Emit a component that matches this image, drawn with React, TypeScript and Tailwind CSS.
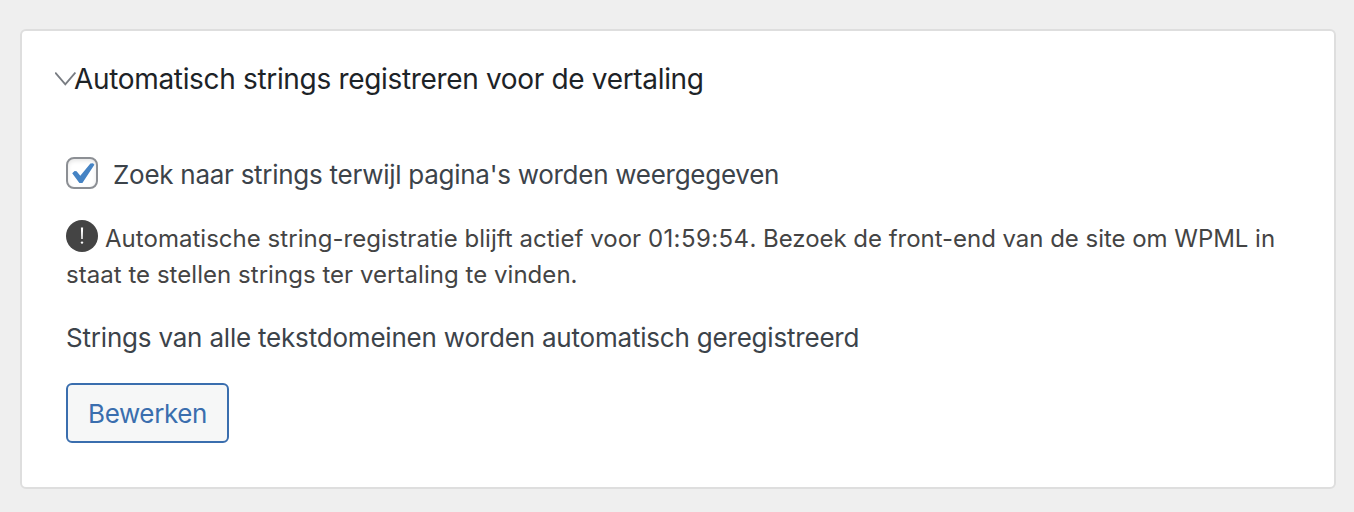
import { useState } from 'react';

interface ScanCheckboxProps {
  checked: boolean;
  onChange: (checked: boolean) => void;
  label: string;
}

function ScanCheckbox({ checked, onChange, label }: ScanCheckboxProps) {
  return (
    <label className="flex h-8 items-center gap-[15px] cursor-pointer">
      <input
        type="checkbox"
        className="sr-only"
        checked={checked}
        onChange={(e) => onChange(e.target.checked)}
      />
      <span className="size-8 shrink-0 rounded-lg border-2 border-[#8c8f94] bg-white shadow-[inset_0_2px_4px_rgba(0,0,0,0.1)]">
        {checked && (
          <svg viewBox="0 0 28 28" className="size-7" fill="#4583c4">
            <path d="M4.2 14.3 6.6 12l2 .3 3.7 4.5L22.4 4.5l2.6-.3 1.4 1.6L14.4 24h-3z" />
          </svg>
        )}
      </span>
      <span className="relative top-0.5 whitespace-nowrap text-[26px] leading-8 tracking-[-0.27px] text-[#3c434a]">
        {label}
      </span>
    </label>
  );
}

export default function App() {
  const [open, setOpen] = useState(true);
  const [scan, setScan] = useState(true);

  return (
    <div className="h-[512px] w-[1354px] bg-[#efefef] pt-[29px] pl-5 font-['Inter',sans-serif]">
      <section className="h-[460px] w-[1316px] rounded-md border-2 border-[#dedede] bg-white pt-8 pl-8">
        <button type="button" onClick={() => setOpen((v) => !v)} className="flex h-8 items-center">
          <svg viewBox="0 0 21 14" className="-mr-0.5 ml-px h-3.5 w-[21px]" fill="none" stroke="#787c82" strokeWidth="1.9">
            <path d="M.2.6 10.3 12.3 20.4.6" />
          </svg>
          <h2 className="whitespace-nowrap text-[28px] leading-8 tracking-[-0.33px] text-[#1d2327]">
            Automatisch strings registreren voor de vertaling
          </h2>
        </button>

        {open && (
          <div className="mt-[62px] pl-3">
            <ScanCheckbox
              checked={scan}
              onChange={setScan}
              label="Zoek naar strings terwijl pagina's worden weergegeven"
            />

            <div className="mt-[31px] whitespace-nowrap text-2xl leading-9 text-[#444]">
              <div className="flex h-9 items-start gap-[7px]">
                <svg viewBox="0 0 32 32" className="size-8 shrink-0">
                  <circle cx="16" cy="16" r="16" fill="#444" />
                  <path d="M14.9 7.6h2.2l-.4 11.3h-1.4z" fill="#fff" />
                  <circle cx="16" cy="22.6" r="1.2" fill="#fff" />
                </svg>
                <p className="pt-px">
                  <span className="tracking-[0.03px]">Automatische string-registratie blijft actief voor </span>
                  <span className="tracking-[0.4px]">01:59:54</span>
                  <span className="tracking-[-0.03px]">. Bezoek de front-end van de site om WPML in</span>
                </p>
              </div>
              <p className="pt-px tracking-[0.04px]">staat te stellen strings ter vertaling te vinden.</p>
            </div>

            <p className="mt-[27px] whitespace-nowrap text-[26px] leading-9 tracking-[-0.2px] text-[#3c434a]">
              Strings van alle tekstdomeinen worden automatisch geregistreerd
            </p>

            <button
              type="button"
              className="mt-[27px] flex h-[60px] w-[163px] items-center justify-center rounded-md border-2 border-[#3a6eae] bg-[#f6f7f7] text-[26px] tracking-[-0.4px] text-[#3a6eae]"
            >
              Bewerken
            </button>
          </div>
        )}
      </section>
    </div>
  );
}
